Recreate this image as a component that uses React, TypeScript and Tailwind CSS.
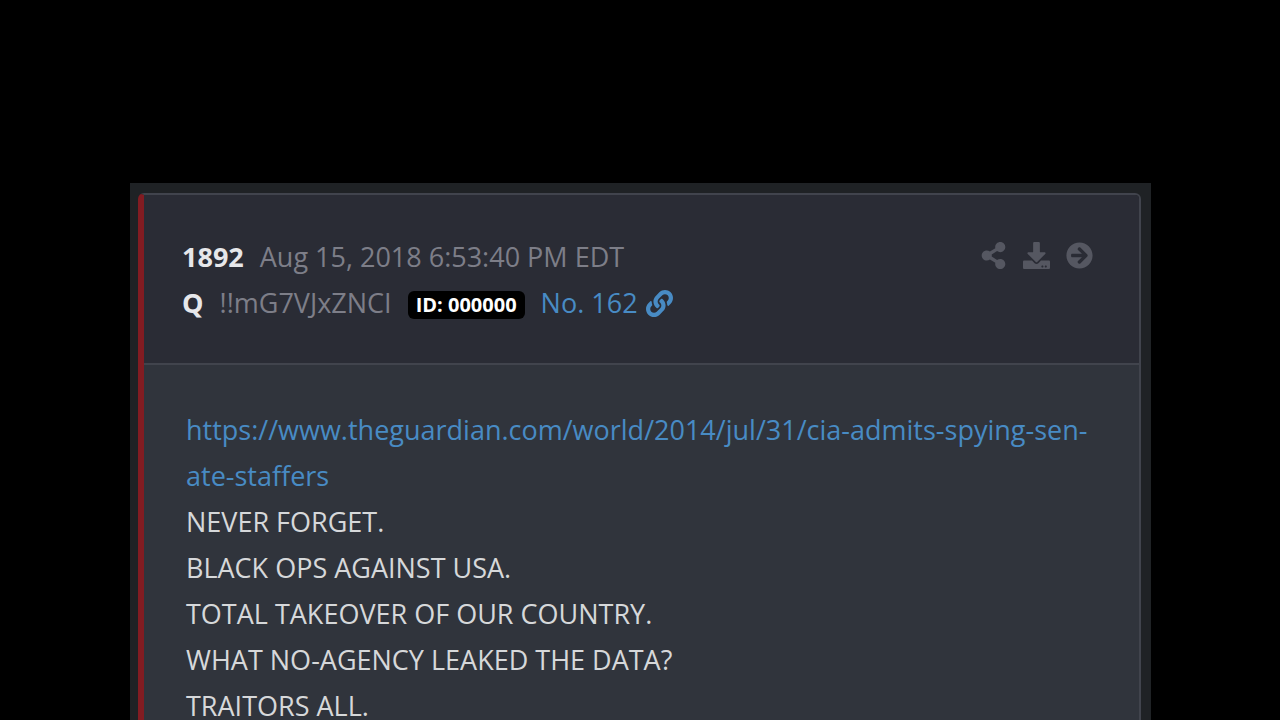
import { FaArrowCircleRight, FaDownload, FaLink, FaShareAlt } from "react-icons/fa";

const lines = [
  "NEVER FORGET.",
  "BLACK OPS AGAINST USA.",
  "TOTAL TAKEOVER OF OUR COUNTRY.",
  "WHAT NO-AGENCY LEAKED THE DATA?",
  "TRAITORS ALL.",
];

const actions = [
  { label: "Share", Icon: FaShareAlt },
  { label: "Download", Icon: FaDownload },
  { label: "Open post", Icon: FaArrowCircleRight },
];

function PostHeader() {
  return (
    <header className="flex items-start justify-between border-b-2 border-[#41444d] bg-[#2a2c35] pt-[39px] pr-[46px] pb-[37px] pl-[38px]">
      <div className="leading-[46px] text-[#7d7e88]">
        <div className="flex items-center gap-4">
          <strong className="font-bold text-[#e6e7ea]">1892</strong>
          <time dateTime="2018-08-15T18:53:40-04:00">Aug 15, 2018 6:53:40 PM EDT</time>
        </div>
        <div className="flex items-center gap-4">
          <strong className="font-bold text-[#e6e7ea]">Q</strong>
          <span>!!mG7VJxZNCI</span>
          <span className="mt-1 rounded-md bg-black px-2 text-xl leading-7 font-bold text-white">
            ID: 000000
          </span>
          <a href="#162" className="flex items-center gap-2 text-[#488bc4]">
            No. 162
            <FaLink />
          </a>
        </div>
      </div>
      <div className="flex gap-4 pt-2 text-[#555761]">
        {actions.map(({ label, Icon }) => (
          <button key={label} type="button" aria-label={label}>
            <Icon />
          </button>
        ))}
      </div>
    </header>
  );
}

export default function App() {
  return (
    <main className="h-screen overflow-hidden bg-black pt-[183px] pr-[129px] pl-[130px] font-['Open_Sans',sans-serif] text-[27px]">
      <div className="min-h-full bg-[#1f2225] pt-2.5 pr-2.5 pl-2">
        <article className="overflow-hidden rounded-md border-2 border-l-6 border-[#41444d] border-l-[#821c22]">
          <PostHeader />
          <div className="bg-[#30343c] px-[42px] py-[42px] leading-[46px] text-[#d6d8da]">
            <a
              href="https://www.theguardian.com/world/2014/jul/31/cia-admits-spying-senate-staffers"
              className="text-[#488bc4]"
            >
              https://www.theguardian.com/world/2014/jul/31/cia-admits-spying-sen-
              <br />
              ate-staffers
            </a>
            {lines.map((line) => (
              <p key={line}>{line}</p>
            ))}
          </div>
        </article>
      </div>
    </main>
  );
}
